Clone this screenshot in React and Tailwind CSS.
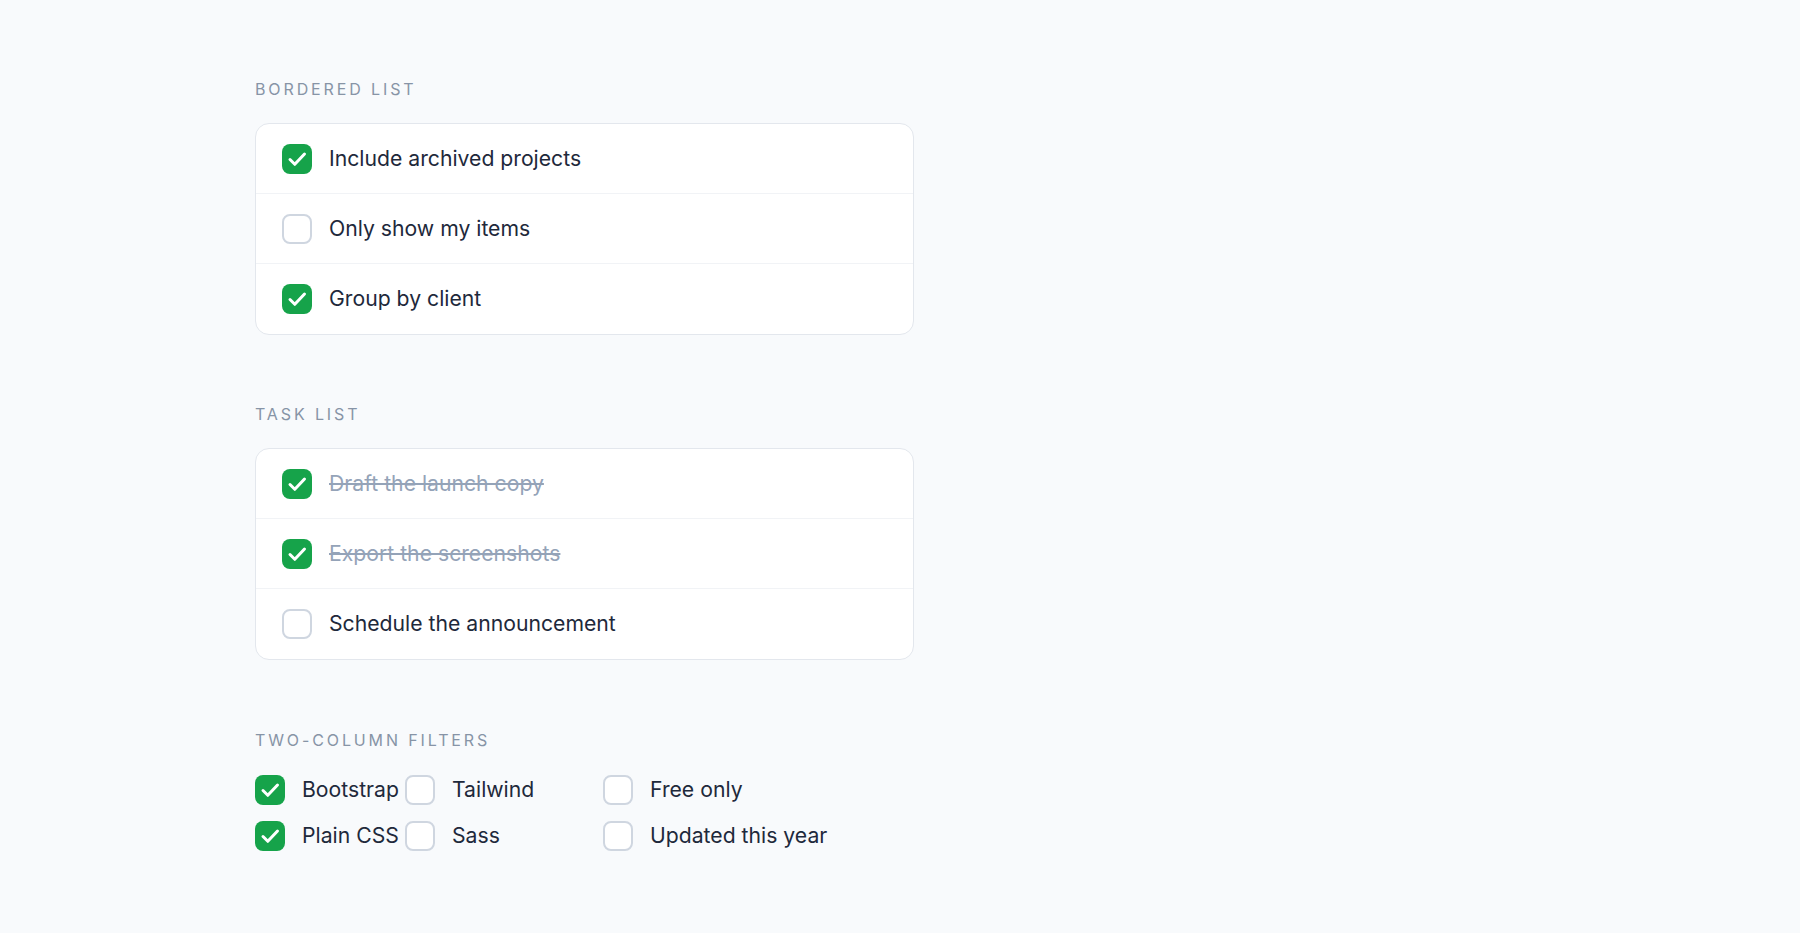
import React, { useState } from "react";

function Box({ checked }) {
    if (checked) {
        return (
            <span className="flex h-[30px] w-[30px] shrink-0 items-center justify-center rounded-[8px] bg-[#16a34a]">
                <svg width="30" height="30" viewBox="0 0 30 30" fill="none">
                    <path
                        d="M8 15.5l4.8 4.8L22.5 10"
                        stroke="white"
                        strokeWidth="3"
                        strokeLinecap="round"
                        strokeLinejoin="round"
                    />
                </svg>
            </span>
        );
    }
    return (
        <span className="block h-[30px] w-[30px] shrink-0 rounded-[8px] border-2 border-[#cfd6e0] bg-white" />
    );
}

function Label({ children }) {
    return (
        <div className="text-[16px] leading-[24px] tracking-[0.18em] text-[#8794a6] uppercase">
            {children}
        </div>
    );
}

export default function App() {
    const [bordered, setBordered] = useState([
        { label: "Include archived projects", checked: true },
        { label: "Only show my items", checked: false },
        { label: "Group by client", checked: true },
    ]);
    const [tasks, setTasks] = useState([
        { label: "Draft the launch copy", checked: true },
        { label: "Export the screenshots", checked: true },
        { label: "Schedule the announcement", checked: false },
    ]);
    const [filters, setFilters] = useState([
        { label: "Bootstrap", checked: true },
        { label: "Tailwind", checked: false },
        { label: "Free only", checked: false },
        { label: "Plain CSS", checked: true },
        { label: "Sass", checked: false },
        { label: "Updated this year", checked: false },
    ]);

    const toggle = (list, setList, idx) =>
        setList(list.map((it, i) => (i === idx ? { ...it, checked: !it.checked } : it)));

    return (
        <div
            className="min-h-[933px] bg-[#f8fafc] pl-[255px] pt-[77px] text-[21.2px] text-[#1e293b]"
            style={{ fontFamily: "Inter, 'Noto Sans', sans-serif" }}
        >
            {/* bordered list */}
            <Label>Bordered list</Label>
            <div className="mt-[22px] w-[659px] divide-y divide-[#f1f3f6] rounded-[14px] border border-[#e3e7ed] bg-white">
                {bordered.map((it, idx) => (
                    <label
                        key={idx}
                        className="flex h-[70px] cursor-pointer items-center gap-[17px] px-[26px]"
                        onClick={() => toggle(bordered, setBordered, idx)}
                    >
                        <Box checked={it.checked} />
                        <span>{it.label}</span>
                    </label>
                ))}
            </div>

            {/* task list */}
            <div className="mt-[67px]">
                <Label>Task list</Label>
            </div>
            <div className="mt-[22px] w-[659px] divide-y divide-[#f1f3f6] rounded-[14px] border border-[#e3e7ed] bg-white">
                {tasks.map((it, idx) => (
                    <label
                        key={idx}
                        className="flex h-[70px] cursor-pointer items-center gap-[17px] px-[26px]"
                        onClick={() => toggle(tasks, setTasks, idx)}
                    >
                        <Box checked={it.checked} />
                        <span className={it.checked ? "text-[#94a3b8] line-through" : ""}>
                            {it.label}
                        </span>
                    </label>
                ))}
            </div>

            {/* two-column filters */}
            <div className="mt-[68px]">
                <Label>Two-column filters</Label>
            </div>
            <div className="mt-[23px] grid grid-cols-[150px_198px_auto] gap-y-[16px]">
                {filters.map((it, idx) => (
                    <label
                        key={idx}
                        className="flex h-[30px] cursor-pointer items-center gap-[17px]"
                        onClick={() => toggle(filters, setFilters, idx)}
                    >
                        <Box checked={it.checked} />
                        <span className="whitespace-nowrap">{it.label}</span>
                    </label>
                ))}
            </div>
        </div>
    );
}
